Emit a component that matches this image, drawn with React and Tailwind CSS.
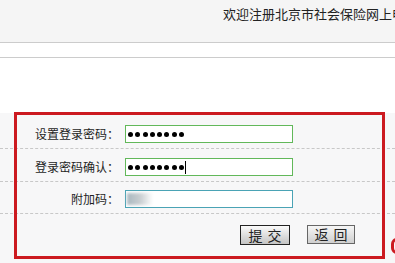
import React from "react";

const font = { fontFamily: '"Noto Sans CJK SC", "Liberation Sans", sans-serif' };

function Dots({ n }) {
  return (
    <div className="flex items-center gap-[2.3px] pl-[2px]">
      {Array.from({ length: n }).map((_, i) => (
        <span key={i} className="block w-[5px] h-[5px] rounded-full bg-black" />
      ))}
    </div>
  );
}

function Row({ label, h, border, children }) {
  return (
    <div className={`flex items-end pb-[5px] border-b border-dashed border-[#c8c8c8] ${h}`}>
      <div className="w-[119px] text-right text-[12px] leading-[18px] text-[#1e1e1e]">{label}</div>
      <div className={`ml-[6px] w-[168px] h-[18px] bg-white border flex items-center ${border}`}>
        {children}
      </div>
    </div>
  );
}

export default function App() {
  return (
    <div className="relative w-[395px] h-[263px] overflow-hidden bg-white" style={font}>
      <div className="h-[43px] bg-[#f5f5f5] border-b border-[#cccccc] overflow-hidden whitespace-nowrap pl-[223px] pt-[6px] text-[13px] leading-[16px] text-[#222]">
        欢迎注册北京市社会保险网上申报系统
      </div>
      <div className="h-[15px] border-b border-[#cccccc]" />
      <div className="h-[55px]" />
      <div className="bg-[#f7f7f8]">
        <Row label="设置登录密码：" h="h-[36px]" border="border-[#62b85a]">
          <Dots n={8} />
        </Row>
        <Row label="登录密码确认：" h="h-[33px]" border="border-[#62b85a]">
          <Dots n={8} />
          <span className="block ml-[1px] w-[1px] h-[13px] bg-black" />
        </Row>
        <Row label="附加码：" h="h-[32px]" border="border-[#4aa3b5]">
          <span className="block ml-[1px] w-[26px] h-[12px] bg-gradient-to-r from-[#aab8c0] via-[#c8cdd0] to-transparent blur-[1.5px]" />
        </Row>
        <div className="h-[50px] flex items-start pt-[11px] pl-[240px] gap-[17px]">
          <button className="w-[50px] h-[20px] border border-[#222] bg-gradient-to-b from-[#fafafa] to-[#c4c4c4] text-[14px] leading-[18px] text-[#222] tracking-[5px] pl-[5px]">
            提交
          </button>
          <button className="w-[48px] h-[19px] border border-[#666] bg-gradient-to-b from-[#f6f6f6] to-[#cfcfcf] text-[14px] leading-[17px] text-[#222] tracking-[5px] pl-[5px]">
            返回
          </button>
        </div>
      </div>
      <div className="absolute left-[14px] top-[112px] w-[371px] h-[147px] border-[3px] border-[#cc1a20]" />
      <div className="absolute left-[391px] top-[238px] w-[12px] h-[16px] rounded-full border-[3px] border-[#cc1a20]" />
    </div>
  );
}
